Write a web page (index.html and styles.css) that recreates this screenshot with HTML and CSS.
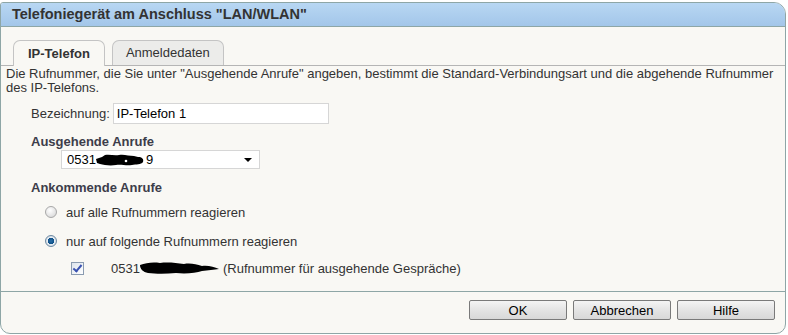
FILE: index.html
```html
<!DOCTYPE html>
<html lang="de">
<head>
    <meta charset="UTF-8">
    <title>Telefoniegerät am Anschluss "LAN/WLAN"</title>
    <link rel="stylesheet" href="styles.css">
</head>
<body>
    <div class="dialog">
        <div class="titlebar">Telefoniegerät am Anschluss "LAN/WLAN"</div>

        <div class="content">
            <div class="tabs">
                <div class="tab active">IP-Telefon</div>
                <div class="tab">Anmeldedaten</div>
            </div>

            <p class="intro">Die Rufnummer, die Sie unter "Ausgehende Anrufe" angeben, bestimmt die Standard-Verbindungsart und die abgehende Rufnummer des IP-Telefons.</p>

            <div class="field-row">
                <label for="name">Bezeichnung:</label>
                <input id="name" class="text-input" type="text" value="IP-Telefon 1">
            </div>

            <h3>Ausgehende Anrufe</h3>
            <div class="select">
                <span class="number">0531<svg class="blot" width="50" height="14" viewBox="0 0 50 14"><path d="M0 6 L6 4 L9 2 C14 1 18 3 23 2 C28 1 33 3 38 3 L42 4 C46 4 48 6 47 9 C45 12 40 11 36 12 C30 13 25 11 20 12 C14 13 8 12 4 11 L1 10 Z" fill="#000"/><circle cx="30" cy="8" r="1.3" fill="#fff"/></svg>9</span>
                <span class="arrow"></span>
            </div>

            <h3 class="incoming">Ankommende Anrufe</h3>
            <div class="options">
                <label class="option"><span class="radio"></span>auf alle Rufnummern reagieren</label>
                <label class="option"><span class="radio checked"></span>nur auf folgende Rufnummern reagieren</label>
                <div class="number-row">
                    <span class="checkbox"></span>
                    <span class="msn">0531<svg class="blot" width="80" height="14" viewBox="0 0 80 14"><path d="M0 4 C6 2 12 1 20 2 C28 1 36 2 44 3 C50 2 56 3 62 5 C68 4 74 6 79 8 C74 9 68 9 62 10 C56 12 46 13 36 12 C26 13 16 13 8 12 C3 11 0 8 0 4 Z" fill="#000"/></svg></span>
                    <span class="note">(Rufnummer für ausgehende Gespräche)</span>
                </div>
            </div>
        </div>

        <div class="footer">
            <button class="btn">OK</button>
            <button class="btn">Abbrechen</button>
            <button class="btn">Hilfe</button>
        </div>
    </div>
</body>
</html>
```

FILE: styles.css
```css
body {
    margin: 0;
    background: #ffffff;
    font-family: "Liberation Sans", Arial, sans-serif;
    font-size: 13px;
    color: #333333;
}

.dialog {
    margin-top: 2px;
    width: 784px;
    height: 330px;
    background: #f9f8f4;
    border: 1px solid #8ea6a6;
    border-radius: 3px 12px 10px 10px;
    overflow: hidden;
    display: flex;
    flex-direction: column;
}

.titlebar {
    height: 23px;
    line-height: 23px;
    padding-left: 11px;
    background: linear-gradient(to bottom, #b8d7f3, #a3c6e9);
    border-bottom: 1px solid #8ea6a6;
    font-size: 14.5px;
    font-weight: bold;
    color: #333333;
}

.content {
    flex: 1;
    padding-top: 12px;
}

.tabs {
    display: flex;
    align-items: flex-end;
    gap: 7px;
    padding-left: 12px;
    border-bottom: 1px solid #b5b5b5;
    height: 26px;
}

.tab {
    height: 24px;
    line-height: 24px;
    padding: 0 13px;
    border: 1px solid #c4c4c4;
    border-bottom: none;
    border-radius: 7px 7px 0 0;
    background: #ececea;
    color: #333333;
}

.tab.active {
    height: 25px;
    line-height: 26px;
    padding: 0 14px;
    background: #f9f8f4;
    font-weight: bold;
    margin-bottom: -1px;
}

.intro {
    margin: 1px 0 0 0;
    padding: 0 10px 0 5px;
    line-height: 14px;
}

.field-row {
    display: flex;
    align-items: center;
    margin-top: 8px;
    padding-left: 30px;
}

.field-row label {
    margin-right: 3px;
}

.text-input {
    width: 208px;
    height: 19px;
    padding: 0 3px;
    border: 1px solid #d6d6d6;
    background: #ffffff;
    font-family: inherit;
    font-size: 13px;
    color: #000000;
}

h3 {
    margin: 10px 0 0 30px;
    font-size: 13px;
    line-height: 16px;
    color: #3d3d4a;
}

h3.incoming {
    margin-top: 11px;
}

.select {
    display: flex;
    align-items: center;
    justify-content: space-between;
    margin-left: 60px;
    width: 185px;
    height: 17px;
    padding: 0 7px 0 5px;
    background: #ffffff;
    border: 1px solid #d6d6d6;
    color: #000000;
}

.number, .msn {
    display: flex;
    align-items: center;
}

.blot {
    display: block;
}

.arrow {
    width: 0;
    height: 0;
    border-left: 4px solid transparent;
    border-right: 4px solid transparent;
    border-top: 4px solid #000000;
}

.options {
    padding-left: 44px;
    margin-top: 8px;
}

.option {
    display: flex;
    align-items: center;
    height: 16px;
    margin-bottom: 13px;
}

.radio {
    width: 12px;
    height: 12px;
    border: 1px solid #a8a8a8;
    border-radius: 50%;
    background: radial-gradient(circle at 40% 35%, #ffffff, #d2d2d2);
    margin-right: 9px;
    box-sizing: border-box;
}

.radio.checked {
    border-color: #6e8aa2;
    background: radial-gradient(circle at 50% 50%, #2a6fa8 0, #0d4f86 3px, #e8eef4 3.5px, #c6d0da 6px);
}

.number-row {
    display: flex;
    align-items: center;
    height: 16px;
    margin-top: -2px;
    padding-left: 26px;
}

.checkbox {
    width: 13px;
    height: 13px;
    box-sizing: border-box;
    border: 1px solid #8a9bb0;
    background: linear-gradient(to bottom right, #dde4ec, #ffffff);
    position: relative;
    margin-right: 27px;
}

.checkbox::after {
    content: "";
    position: absolute;
    left: 3px;
    top: 0;
    width: 3px;
    height: 7px;
    border-right: 2px solid #3a52b0;
    border-bottom: 2px solid #3a52b0;
    transform: rotate(40deg);
}

.msn {
    width: 112px;
    color: #333333;
}

.footer {
    height: 42px;
    border-top: 1px solid #8ea6a6;
    display: flex;
    justify-content: flex-end;
    align-items: flex-start;
    gap: 6px;
    padding: 8px 10px 0 0;
    box-sizing: border-box;
}

.btn {
    width: 98px;
    height: 20px;
    border: 1px solid #7a7a7a;
    border-radius: 2px;
    background: linear-gradient(to bottom, #f4f4f4, #e4e4e4 50%, #d8d8d8);
    font-family: inherit;
    font-size: 13px;
    color: #000000;
    padding: 0;
}
```
